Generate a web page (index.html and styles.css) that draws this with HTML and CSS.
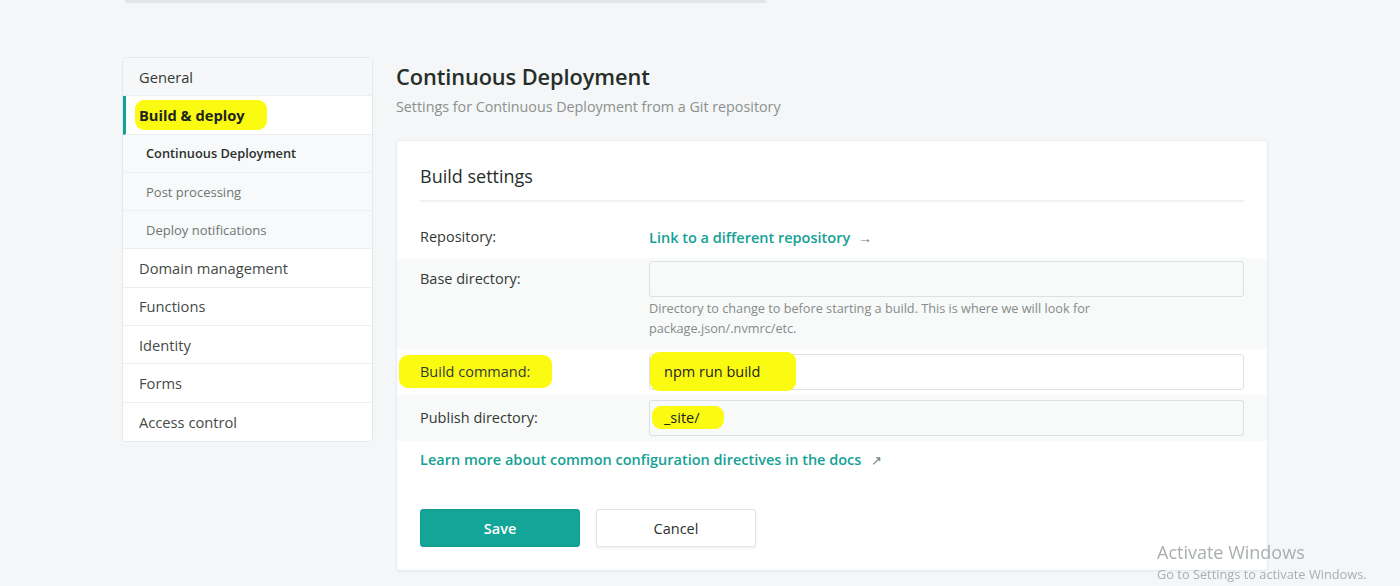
FILE: index.html
```html
<!DOCTYPE html>
<html lang="en">
<head>
<meta charset="utf-8">
<title>Build &amp; deploy</title>
<link rel="stylesheet" href="styles.css">
</head>
<body>
<div class="top-stub"></div>
<div class="layout">
  <nav class="sidenav">
    <a class="nav-item">General</a>
    <a class="nav-item active"><span class="hl hl-nav">Build &amp; deploy</span></a>
    <a class="nav-sub current">Continuous Deployment</a>
    <a class="nav-sub">Post processing</a>
    <a class="nav-sub">Deploy notifications</a>
    <a class="nav-item plain">Domain management</a>
    <a class="nav-item plain">Functions</a>
    <a class="nav-item plain">Identity</a>
    <a class="nav-item plain">Forms</a>
    <a class="nav-item plain last">Access control</a>
  </nav>
  <main class="main">
    <h1 class="page-title">Continuous Deployment</h1>
    <p class="page-sub">Settings for Continuous Deployment from a Git repository</p>
    <section class="card">
      <div class="card-head">
        <h2 class="card-title">Build settings</h2>
      </div>
      <div class="rows">
        <div class="row">
          <div class="label">Repository:</div>
          <div class="field"><a class="link">Link to a different repository <span class="arrow">→</span></a></div>
        </div>
        <div class="row striped base">
          <div class="label">Base directory:</div>
          <div class="field">
            <div class="input"></div>
            <p class="help">Directory to change to before starting a build. This is where we will look for package.json/.nvmrc/etc.</p>
          </div>
        </div>
        <div class="row">
          <div class="label"><span class="hl hl-label">Build command:</span></div>
          <div class="field"><div class="input"><span class="hl hl-value">npm run build</span></div></div>
        </div>
        <div class="row striped">
          <div class="label">Publish directory:</div>
          <div class="field"><div class="input"><span class="hl hl-site">_site/</span></div></div>
        </div>
      </div>
      <a class="link docs">Learn more about common configuration directives in the docs <span class="arrow ext">↗</span></a>
      <div class="actions">
        <button class="btn btn-primary">Save</button>
        <button class="btn btn-default">Cancel</button>
      </div>
    </section>
  </main>
</div>
<div class="watermark">
  <div class="wm-title">Activate Windows</div>
  <div class="wm-sub">Go to Settings to activate Windows.</div>
</div>
</body>
</html>
```

FILE: styles.css
```css
* { box-sizing: border-box; }
html, body { margin: 0; padding: 0; }
body {
  background: #f5f6f8;
  font-family: "Open Sans", "Noto Sans", sans-serif;
  color: #2e3532;
  height: 586px;
  overflow: hidden;
}

.top-stub {
  margin-left: 125px;
  width: 641px;
  height: 3px;
  background: #e3e6e8;
}

.layout {
  display: flex;
  gap: 23px;
  padding: 54px 0 0 122px;
}

/* sidebar */
.sidenav {
  width: 251px;
  display: flex;
  flex-direction: column;
  border: 1px solid #e6e9eb;
  border-radius: 4px;
  background: #fff;
  align-self: flex-start;
  overflow: hidden;
}
.nav-item, .nav-sub {
  display: flex;
  align-items: center;
  height: 38.3px;
  padding-left: 16px;
  border-bottom: 1px solid #eceef0;
  font-size: 14.7px;
  color: #333a36;
  white-space: nowrap;
}
.nav-item { background: #f6f7f8; }
.nav-item.plain { background: #fff; color: #444b47; }
.nav-item.last { border-bottom: 0; }
.nav-item.active {
  background: #fff;
  border-left: 3px solid #14a296;
  padding-left: 13px;
  font-weight: 700;
  color: #1e2420;
}
.nav-sub {
  padding-left: 23px;
  font-size: 13px;
  color: #6f7673;
  background: #f8f9fa;
}
.nav-sub.current { color: #2a302c; font-weight: 600; font-size: 12.8px; }

/* highlighter marks */
.hl {
  background: #fbfb12;
  border-radius: 9px;
}
.hl-nav { padding: 5px 22px 5px 4px; margin-left: -4px; }
.hl-label { padding: 7px 22px 7px 21px; margin-left: -21px; }
.hl-value { padding: 10px 36px 10px 14px; margin-left: -14px; }
.hl-site { padding: 2px 24px 2px 12px; margin-left: -12px; }

/* main */
.main { width: 872px; }
.page-title {
  margin: 6px 0 0;
  font-size: 21.8px;
  line-height: 28px;
  font-weight: 600;
  color: #262e29;
  letter-spacing: -0.1px;
}
.page-sub {
  margin: 6px 0 0;
  font-size: 14.3px;
  line-height: 20px;
  color: #8a918e;
}
.card {
  margin-top: 23px;
  background: #fff;
  border: 1px solid #e9ecee;
  border-radius: 4px;
  box-shadow: 0 1px 2px rgba(0,0,0,0.04);
  padding-bottom: 23px;
}
.card-head {
  margin: 0 23px;
  padding: 22px 0 11px;
  border-bottom: 2px solid #eff1f2;
}
.card-title {
  margin: 0;
  font-size: 18px;
  line-height: 26px;
  font-weight: 500;
  color: #262e29;
}
.rows { margin-top: 15px; }
.row {
  display: grid;
  grid-template-columns: 229px 1fr;
  align-items: start;
  padding: 5px 23px;
  min-height: 40px;
}
.row.striped { background: #f8f9f9; }
.row.base { padding-top: 3px; padding-bottom: 11px; }
.label {
  font-size: 14.5px;
  line-height: 36px;
  color: #333a36;
  white-space: nowrap;
}
.row:first-child .label, .row:first-child .field { line-height: 30px; }
.field { min-width: 0; }
.link {
  color: #15a195;
  font-size: 14.5px;
  font-weight: 600;
  text-decoration: none;
}
.arrow { color: #6b8680; font-weight: 400; font-size: 14px; margin-left: 4px; }
.arrow.ext { margin-left: 6px; font-size: 13px; }
.input {
  height: 36px;
  border: 1px solid #dde1e3;
  border-radius: 3px;
  padding: 0 14px;
  font-size: 14.5px;
  line-height: 34px;
  font-weight: 500;
  color: #1d2320;
  white-space: nowrap;
}
.help {
  margin: 1px 0 0;
  font-size: 12.7px;
  line-height: 20px;
  color: #858c89;
  max-width: 470px;
}
.docs {
  display: block;
  margin: 9px 23px 0;
  line-height: 20px;
}
.actions {
  display: flex;
  gap: 16px;
  margin: 39px 23px 0;
}
.btn {
  width: 160px;
  height: 38px;
  border-radius: 3px;
  font-family: inherit;
  font-size: 14.5px;
}
.btn-primary {
  background: #13a597;
  border: 1px solid #11998c;
  color: #fff;
  font-weight: 600;
}
.btn-default {
  background: #fff;
  border: 1px solid #e3e6e8;
  box-shadow: 0 1px 3px rgba(0,0,0,0.08);
  color: #2a302c;
}

/* OS watermark overlay */
.watermark {
  position: fixed;
  left: 1157px;
  top: 540px;
  color: #a9aeb0;
  font-family: "Open Sans", "Noto Sans", sans-serif;
}
.wm-title { font-size: 18px; line-height: 25px; }
.wm-sub { font-size: 12.8px; line-height: 18px; }
```
